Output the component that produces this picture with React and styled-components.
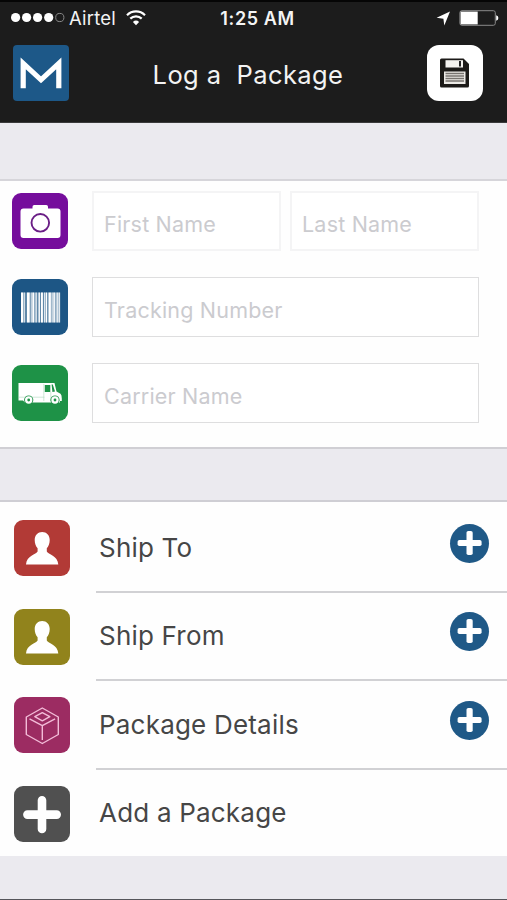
import styled, { createGlobalStyle } from "styled-components";

const GlobalStyle = createGlobalStyle`
* {
    box-sizing: border-box;
}
body {
    margin: 0;
    background: #ebeaef;
    font-family: Inter, "Liberation Sans", sans-serif;
}
`;

const Screen = styled.div`
display: flex;
flex-direction: column;
width: 507px;
height: 900px;
overflow: hidden;
background: #ebeaef;
border-bottom: 1px solid #55555a;
`;

const Header = styled.header`
height: 123px;
background: #1c1c1c;
border-top: 2px solid #050505;
border-bottom: 1px solid #3a3a3b;
`;

const StatusBar = styled.div`
display: grid;
grid-template-columns: 1fr auto 1fr;
align-items: center;
height: 32px;
padding: 0 8px 0 11px;
color: #f4f4f4;
font-size: 18px;
`;

const StatusGroup = styled.div`
display: flex;
align-items: center;
gap: ${(props) => (props.$end ? "8px" : "0")};
justify-content: ${(props) => (props.$end ? "flex-end" : "flex-start")};
`;

const Carrier = styled.span`
margin: 0 10px 0 4px;
font-size: 18.5px;
letter-spacing: 0.2px;
`;

const Clock = styled.span`
margin-left: 5px;
font-weight: 600;
font-size: 18px;
letter-spacing: 0.6px;
`;

const NavBar = styled.div`
display: flex;
justify-content: space-between;
align-items: center;
height: 56px;
margin-top: 11px;
padding: 0 24px 0 13px;
`;

const Logo = styled.div`
display: flex;
width: 56px;
height: 56px;
border-radius: 4px;
background: #1d5888;
`;

const Title = styled.h1`
margin: 3px 0 0;
color: #f3f3f3;
font-size: 25.5px;
font-weight: 400;
letter-spacing: 0.4px;
white-space: pre;
`;

const SaveButton = styled.button`
display: flex;
width: 56px;
height: 56px;
padding: 0;
border: 0;
border-radius: 12px;
background: #fff;
`;

const Form = styled.form`
display: flex;
flex-direction: column;
gap: 26px;
height: 270px;
margin-top: 56px;
padding: 10px 28px 0 12px;
background: #fefefe;
border-top: 2px solid #d6d5da;
border-bottom: 2px solid #d0cfd4;
`;

const FormRow = styled.div`
display: flex;
align-items: center;
height: 60px;
`;

const Fields = styled.div`
display: flex;
flex: 1;
min-width: 0;
gap: 9px;
margin-left: 24px;
`;

const StyledInput = styled.input`
flex: 1;
width: 0;
min-width: 0;
height: 60px;
padding: 5px 10px 0 ${(props) => (props.$soft ? "10px" : "11px")};
border: ${(props) => (props.$soft ? "2px solid #f4f4f5" : "1px solid #dededf")};
border-radius: 0;
background: #fff;
color: #444;
font-family: inherit;
font-size: 21.5px;
letter-spacing: 0.2px;
outline: none;
&::placeholder {
    color: #cbcbcf;
    opacity: 1;
}
`;

const Tile = styled.div`
display: flex;
flex: none;
width: 56px;
height: 56px;
border-radius: 9px;
background: ${(props) => props.$color};
`;

const List = styled.div`
height: 356px;
margin-top: 51px;
padding-top: 2px;
background: #fefefe;
border-top: 2px solid #cfced4;
`;

const ListRow = styled.div`
display: flex;
align-items: center;
height: 88.5px;
padding-left: 14px;
`;

const RowBody = styled.div`
display: flex;
justify-content: space-between;
align-items: center;
flex: 1;
height: 100%;
margin-left: 26px;
padding: 0 18px 0 3px;
border-bottom: 2px solid ${(props) => (props.$last ? "transparent" : "#d1d1d4")};
`;

const Label = styled.span`
color: #464646;
font-size: 26px;
letter-spacing: 0.2px;
`;

const AddButton = styled.button`
display: flex;
width: 39px;
height: 39px;
margin-bottom: 8px;
padding: 0;
border: 0;
border-radius: 50%;
background: #1f5987;
`;

const SignalIcon = () => (
    <svg width="54" height="12" viewBox="0 0 54 12">
        {[4.6, 15.6, 26.6, 37.7].map((cx) => (
            <circle key={cx} cx={cx} cy="5.5" r="4.6" fill="#fff" />
        ))}
        <circle cx="48.8" cy="5.5" r="4.1" fill="none" stroke="#888" strokeWidth="1" />
    </svg>
);

const WifiIcon = () => (
    <svg width="20" height="16" viewBox="0 0 20 16" fill="none" stroke="#fff" strokeWidth="2.2">
        <path d="M1 5.2C6 .2 14 .2 19 5.2" />
        <path d="M4.3 8.6C7.5 5.5 12.5 5.5 15.7 8.6" />
        <path d="M10 15.2 6.9 11.9Q10 9.2 13.1 11.9Z" fill="#fff" stroke="none" />
    </svg>
);

const LocationIcon = () => (
    <svg width="15" height="15" viewBox="0 0 15 15">
        <path d="M14 .6 8.3 14.4 7.4 7.8.6 6.8Z" fill="#fff" />
    </svg>
);

const BatteryIcon = () => (
    <svg width="40" height="17" viewBox="0 0 40 17">
        <rect x=".9" y=".7" width="35.4" height="14.6" rx="2" fill="none" stroke="#8a8a8a" strokeWidth="1" />
        <path d="M1.6 1.6H18.7V14.4H1.6Z" fill="#fff" />
        <path d="M37.2 5.2Q39.4 6 39.4 8T37.2 10.8Z" fill="#fff" />
    </svg>
);

const LogoIcon = () => (
    <svg width="56" height="56" viewBox="0 0 56 56">
        <path d="M10.2 43.3V18.4L28 34.8 45.8 18.4V43.3" fill="none" stroke="#fff" strokeWidth="5.2" strokeMiterlimit="4" />
    </svg>
);

const SaveIcon = () => (
    <svg width="56" height="56" viewBox="0 0 56 56">
        <path d="M14.5 13.5H36.5L42 19V41Q42 42.5 40.5 42.5H14.5Q13 42.5 13 41V15Q13 13.5 14.5 13.5Z" fill="#1c1a18" />
        <path d="M18.5 15.2H36V22.5H18.5Z" fill="#f5f3f0" />
        <path d="M32 16H34V21.5H32Z" fill="#222" />
        <path d="M17 26.5H38.5V39H17Z" fill="#eceae6" />
        <path d="M18.5 28.5H37M18.5 31H37M18.5 33.5H37M18.5 36H37" stroke="#77736f" strokeWidth="1.5" />
    </svg>
);

const CameraIcon = () => (
    <svg width="56" height="56" viewBox="0 0 56 56">
        <path d="M11.5 15.5H20.5V13.8Q20.5 12 22.3 12H34.2Q36 12 36 13.8V15.5H45.5Q48.5 15.5 48.5 18.5V42Q48.5 45 45.5 45H11.5Q8.5 45 8.5 42V18.5Q8.5 15.5 11.5 15.5Z" fill="#fff" />
        <circle cx="28.3" cy="29.8" r="8.8" fill="#fff" stroke="#6a1e86" strokeWidth="1.9" />
    </svg>
);

// [x, width] of every bar
const bars = [
    [9, 2.2], [11.8, .9], [15, 2.7], [18.8, .8], [20.3, 2], [23.5, 1.2], [26.5, 1.4],
    [29, 1.9], [32, .8], [33.6, 1.5], [36.5, 2.4], [39.6, 1], [41.3, 1.6], [43.7, .8], [45.2, 1.3], [47.2, .9],
];

const BarcodeIcon = () => (
    <svg width="56" height="56" viewBox="0 0 56 56">
        <path d="M9 13.5H48V43.5H9Z" fill="#fff" opacity=".3" />
        {bars.map(([x, w]) => (
            <rect key={x} x={x} y="13.5" width={w} height="30" fill="#fff" />
        ))}
    </svg>
);

const TruckIcon = () => (
    <svg width="56" height="56" viewBox="0 0 56 56">
        <path d="M6.5 18H42.5L44.5 26.5 48.5 28.8Q49.8 30 49.8 33.5V36H48V37.5H13L11 35.5H6.5Z" fill="#fff" />
        <path d="M32.8 20H38.3V27H32.8ZM39.6 19.6H40.8L43 26.6 40.4 27Z" fill="#1e9247" />
        <path d="M7 32.2H32.5M31.8 19V36M38.8 27V36" stroke="#1e9247" strokeWidth=".6" opacity=".35" />
        {[16.7, 43].map((cx) => (
            <g key={cx}>
                <circle cx={cx} cy="35" r="4.6" fill="#1e9247" />
                <circle cx={cx} cy="35" r="3.7" fill="#fff" />
                <circle cx={cx} cy="35" r="1.4" fill="#1e9247" />
            </g>
        ))}
    </svg>
);

const PersonIcon = () => (
    <svg width="56" height="56" viewBox="0 0 56 56">
        <path d="M28.2 12C32.5 12 35.7 15 35.7 20C35.7 23.5 34.5 26.3 32.8 28.3V31.5C34 34.5 43.8 35.5 44.3 44.4H12C12.5 35.5 22.4 34.5 23.6 31.5V28.3C21.9 26.3 20.7 23.5 20.7 20C20.7 15 23.9 12 28.2 12Z" fill="#fff" />
    </svg>
);

const BoxIcon = () => (
    <svg width="56" height="56" viewBox="0 0 56 56" fill="none" stroke="#f3bcd8" strokeWidth="1.4" strokeLinejoin="round">
        <path d="M28.3 11 44.3 20V37.5L28.3 46.5 12.3 37.5V20Z" />
        <path d="M15.5 21.8 28.3 28.6 41.1 21.8M28.3 28.6V43" />
        <path d="M28.3 15.6 35.8 19.7 28.3 23.8 20.8 19.7Z" />
    </svg>
);

const PlusIcon = () => (
    <svg width="56" height="56" viewBox="0 0 56 56">
        <path d="M28 14.3V43M13.4 28.6H42.7" stroke="#fff" strokeWidth="8.6" strokeLinecap="round" />
    </svg>
);

const AddIcon = () => (
    <svg width="39" height="39" viewBox="0 0 39 39" fill="#fff">
        <rect x="16.5" y="7" width="6.2" height="24" rx="1.8" />
        <rect x="7.6" y="15.9" width="24" height="6.2" rx="1.8" />
    </svg>
);

const items = [
    { label: "Ship To", color: "#b23a36", Icon: PersonIcon, add: true },
    { label: "Ship From", color: "#91831c", Icon: PersonIcon, add: true },
    { label: "Package Details", color: "#9c2c62", Icon: BoxIcon, add: true },
    { label: "Add a Package", color: "#505050", Icon: PlusIcon, add: false },
];

export const App = () => {
    return (
        <>
            <GlobalStyle />
            <Screen>
                <Header>
                    <StatusBar>
                        <StatusGroup>
                            <SignalIcon />
                            <Carrier>Airtel</Carrier>
                            <WifiIcon />
                        </StatusGroup>
                        <Clock>1:25 AM</Clock>
                        <StatusGroup $end>
                            <LocationIcon />
                            <BatteryIcon />
                        </StatusGroup>
                    </StatusBar>
                    <NavBar>
                        <Logo><LogoIcon /></Logo>
                        <Title>Log a  Package</Title>
                        <SaveButton aria-label="Save"><SaveIcon /></SaveButton>
                    </NavBar>
                </Header>
                <Form>
                    <FormRow>
                        <Tile $color="#750d9c"><CameraIcon /></Tile>
                        <Fields>
                            <StyledInput $soft placeholder="First Name" />
                            <StyledInput $soft placeholder="Last Name" />
                        </Fields>
                    </FormRow>
                    <FormRow>
                        <Tile $color="#1d5685"><BarcodeIcon /></Tile>
                        <Fields>
                            <StyledInput placeholder="Tracking Number" />
                        </Fields>
                    </FormRow>
                    <FormRow>
                        <Tile $color="#1e9247"><TruckIcon /></Tile>
                        <Fields>
                            <StyledInput placeholder="Carrier Name" />
                        </Fields>
                    </FormRow>
                </Form>
                <List>
                    {items.map(({ label, color, Icon, add }) => (
                        <ListRow key={label}>
                            <Tile $color={color}><Icon /></Tile>
                            <RowBody $last={!add}>
                                <Label>{label}</Label>
                                {add && <AddButton aria-label={label}><AddIcon /></AddButton>}
                            </RowBody>
                        </ListRow>
                    ))}
                </List>
            </Screen>
        </>
    )
}

export default App;
